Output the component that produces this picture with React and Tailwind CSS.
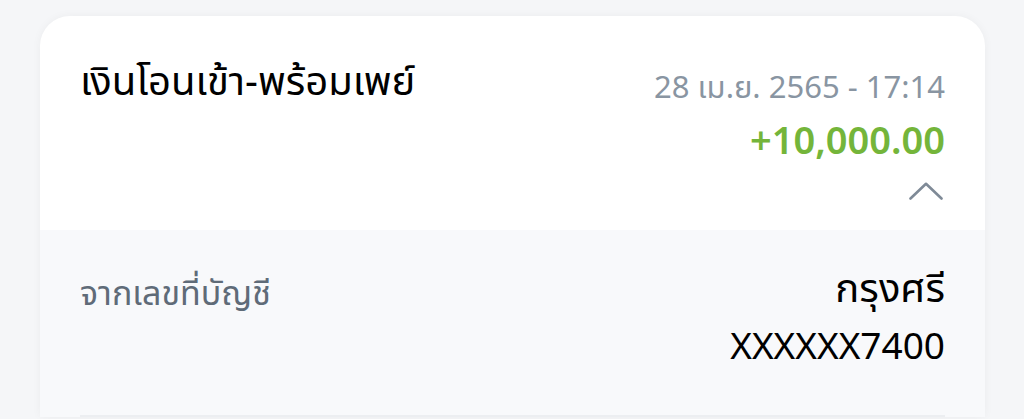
const App = () => {
  return (
    <div className="min-h-screen bg-[#f5f6f8] pt-4 pl-10 pr-[39px] overflow-hidden" style={{ fontFamily: '"Noto Sans", "Noto Sans Thai", "Noto Sans CJK SC", sans-serif' }}>
      <div className="bg-white rounded-t-[30px] shadow-[0_0_10px_rgba(0,0,0,0.045)] overflow-hidden">
        {/* header */}
        <div className="flex justify-between items-start px-10 pt-10 pb-[30px]">
          <h1 className="text-[40px] leading-[48px] text-black">เงินโอนเข้า-พร้อมเพย์</h1>
          <div className="flex flex-col items-end mt-[7px]">
            <span className="text-[31px] leading-[46px] text-[#8995a2]">28 เม.ย. 2565 - 17:14</span>
            <span className="mt-[7px] text-[38px] leading-[46px] font-semibold text-[#74b53a]">+10,000.00</span>
            <svg className="mt-5 mr-[2px]" width="34" height="18" viewBox="0 0 34 18" fill="none">
              <path d="M1.5 16.5 L17 1.8 L32.5 16.5" stroke="#7f8a97" strokeWidth="2.6" strokeLinecap="round" strokeLinejoin="round" />
            </svg>
          </div>
        </div>
        {/* detail */}
        <div className="bg-[#f8f9fb] px-10 pt-10">
          <div className="flex justify-between items-start pb-[47px] border-b-2 border-[#eceef1]">
            <span className="text-[34px] leading-[44px] text-[#5f6b78]">จากเลขที่บัญชี</span>
            <div className="flex flex-col items-end">
              <span className="text-[40px] leading-[34px] text-black">กรุงศรี</span>
              <span className="mt-[18px] text-[37px] leading-[46px] text-black">XXXXXX7400</span>
            </div>
          </div>
        </div>
      </div>
    </div>
  );
};

export default App;
